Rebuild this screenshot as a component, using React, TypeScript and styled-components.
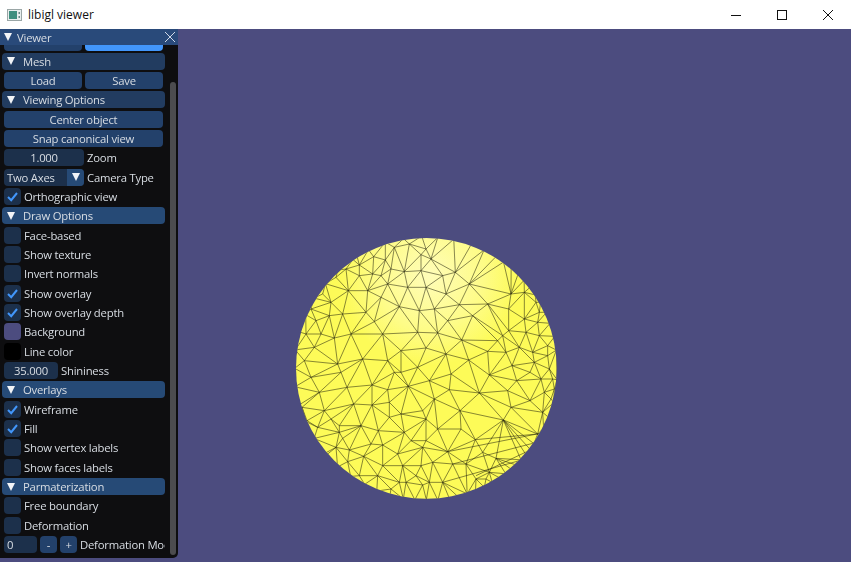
import React, { useMemo } from "react";
import styled, { createGlobalStyle } from "styled-components";

const GlobalStyle = createGlobalStyle`
  html, body {
    margin: 0;
    padding: 0;
    overflow: hidden;
    background: #4c4c7f;
  }
`;

const Page = styled.div`
  width: 851px;
  height: 562px;
  display: flex;
  flex-direction: column;
  overflow: hidden;
`;

const TitleBar = styled.header`
  height: 29px;
  flex: none;
  display: flex;
  align-items: center;
  background: #fff;
  padding-left: 7px;
  font-family: "Open Sans", "Noto Sans", sans-serif;
  font-size: 12px;
  color: #111;
`;

const TitleText = styled.span`
  margin-left: 6px;
  flex: 1;
`;

const WinButton = styled.div`
  width: 46px;
  height: 29px;
  display: flex;
  align-items: center;
  justify-content: center;
`;

const Viewport = styled.main`
  position: relative;
  flex: 1;
  display: flex;
  justify-content: center;
  align-items: flex-start;
  padding-top: 200px;
  background: #4c4c7f;
`;

const Panel = styled.aside`
  position: absolute;
  left: 0;
  top: 0;
  width: 178px;
  height: 529px;
  background: #0e0e10;
  border-radius: 0 0 5px 0;
  overflow: hidden;
  font-family: "Open Sans", "Noto Sans", sans-serif;
  font-size: 11.3px;
  letter-spacing: -0.22px;
  color: #d8dde3;
  filter: blur(0.3px);
`;

const PanelTitle = styled.div`
  height: 16px;
  display: flex;
  align-items: center;
  gap: 5px;
  padding: 0 3px 0 4px;
  background: #294a7a;
`;

const TitleLabel = styled.span`
  flex: 1;
`;

const Arrow = styled.i`
  flex: none;
  width: 0;
  height: 0;
  border-left: 4.5px solid transparent;
  border-right: 4.5px solid transparent;
  border-top: 8px solid #f2f4f7;
`;

const Body = styled.div`
  width: 165px;
  display: flex;
  flex-direction: column;
  gap: 2.33px;
  overflow: hidden;
`;

const ClippedRow = styled.div`
  height: 5.5px;
  display: flex;
  align-items: flex-end;
  gap: 3px;
  padding-left: 4px;
  margin-right: 2px;
  overflow: hidden;
`;

const ClippedButton = styled.div<{ $active?: boolean }>`
  flex: 1;
  height: 17px;
  border-radius: 4px;
  background: ${(p) => (p.$active ? "#4296fa" : "#23416b")};
`;

const Header = styled.div<{ $dim?: boolean }>`
  height: 17px;
  margin-left: 2px;
  display: flex;
  align-items: center;
  gap: 8px;
  padding-left: 5px;
  border-radius: 4px;
  background: ${(p) => (p.$dim ? "#223c60" : "#264a76")};
`;

const Row = styled.div`
  height: 17px;
  display: flex;
  align-items: center;
  gap: 3px;
  padding-left: 4px;
  white-space: nowrap;
`;

const Button = styled.div<{ $width?: number }>`
  flex: ${(p) => (p.$width ? "none" : "1")};
  width: ${(p) => (p.$width ? `${p.$width}px` : "auto")};
  height: 17px;
  display: flex;
  align-items: center;
  justify-content: center;
  border-radius: 4px;
  background: #23416b;
`;

const ButtonRow = styled(Row)`
  padding-right: 2px;
`;

const Input = styled.div<{ $width: number; $left?: boolean }>`
  flex: none;
  width: ${(p) => p.$width}px;
  height: 17px;
  display: flex;
  align-items: center;
  justify-content: ${(p) => (p.$left ? "flex-start" : "center")};
  padding-left: ${(p) => (p.$left ? "3px" : "0")};
  box-sizing: border-box;
  border-radius: 4px;
  background: #1c304b;
`;

const Combo = styled(Input)`
  justify-content: space-between;
  padding-left: 3px;
  overflow: hidden;
`;

const ComboArrow = styled.div`
  width: 17px;
  height: 17px;
  display: flex;
  align-items: center;
  justify-content: center;
  background: #264a76;
`;

const Check = styled.div<{ $color?: string }>`
  flex: none;
  width: 17px;
  height: 17px;
  display: flex;
  align-items: center;
  justify-content: center;
  border-radius: 4px;
  background: ${(p) => p.$color ?? "#1c304b"};
`;

const Clip = styled.span`
  overflow: hidden;
`;

const Scrollbar = styled.div`
  position: absolute;
  left: 170px;
  top: 53px;
  width: 6px;
  height: 473px;
  border-radius: 3px;
  background: #4c4c4f;
`;

const SphereFrame = styled.svg`
  flex: none;
  display: block;
  width: 280px;
  height: 280px;
`;

const TickIcon = () => (
  <svg width="13" height="13" viewBox="0 0 13 13" fill="none">
    <path d="M2 7l3.2 3.2L11 3" stroke="#4296fa" strokeWidth="2" />
  </svg>
);

const CX = 421;
const CY = 418;
const R = 391;

const quadrants: { dx: number; dy: number; pts: number[][] }[] = [
  {
    dx: 15,
    dy: 15,
    pts: [
      [283, 78], [340, 113], [205, 93], [248, 68], [390, 62], [172, 170], [205, 125], [290, 150],
      [225, 235], [155, 240], [115, 245], [270, 190], [325, 218], [385, 230], [250, 263], [180, 300],
      [275, 300], [330, 350], [380, 295], [130, 312], [75, 260], [45, 300], [95, 180], [135, 130],
      [140, 390], [215, 375], [40, 380], [70, 340], [245, 120], [165, 105], [230, 170], [350, 160],
      [310, 40], [355, 30], [270, 125], [300, 105], [195, 55], [120, 205], [60, 225], [90, 300],
    ],
  },
  {
    dx: 420,
    dy: 15,
    pts: [
      [50, 125], [88, 115], [130, 150], [60, 180], [100, 212], [140, 245], [185, 210], [25, 225],
      [65, 260], [35, 297], [107, 318], [60, 360], [128, 378], [185, 352], [248, 290], [248, 225],
      [255, 180], [295, 255], [335, 265], [300, 295], [340, 305], [365, 335], [320, 355], [270, 170],
      [295, 175], [330, 205], [340, 235], [15, 75], [0, 160], [-15, 110], [215, 320], [280, 340],
    ],
  },
  {
    dx: 15,
    dy: 420,
    pts: [
      [168, 55], [243, 48], [290, 62], [352, 52], [188, 105], [243, 108], [295, 100], [100, 125],
      [120, 150], [33, 115], [48, 155], [80, 175], [145, 170], [210, 170], [262, 185], [295, 145],
      [340, 190], [155, 208], [175, 243], [240, 225], [275, 228], [320, 255], [360, 215], [218, 262],
      [170, 278], [275, 290], [335, 290], [205, 320], [260, 320], [345, 340], [395, 348], [300, 360],
      [390, 290], [135, 235], [110, 255], [310, 10], [150, 10], [85, 70], [60, 25], [395, 125],
    ],
  },
  {
    dx: 420,
    dy: 420,
    pts: [
      [75, 15], [10, 35], [70, 62], [190, 18], [272, 35], [160, 72], [245, 65], [312, 95],
      [255, 115], [25, 90], [102, 125], [0, 150], [232, 153], [35, 180], [148, 212], [65, 248],
      [0, 215], [80, 285], [210, 268], [0, 295], [50, 340], [150, 330], [190, 310], [335, 195],
      [385, 60], [345, 30], [120, 285], [350, 130],
    ],
  },
  {
    // whole-sphere points, mostly along the seams of the four lists above
    dx: 0,
    dy: 0,
    pts: [
      [420, 357], [395, 415], [430, 460], [500, 435], [550, 392], [605, 368], [612, 438], [580, 490],
      [495, 485], [445, 512], [368, 470], [310, 525], [258, 468], [185, 475], [155, 405], [230, 385],
      [293, 312], [348, 368], [345, 430], [305, 395], [665, 480], [672, 535], [732, 430], [735, 505],
      [678, 410], [660, 370], [700, 345], [650, 320], [745, 400], [790, 420], [785, 380], [800, 450],
      [775, 490], [795, 510], [520, 545], [430, 568], [455, 600], [370, 635], [345, 555], [275, 605],
      [225, 590], [205, 525], [115, 545], [310, 570], [560, 632], [655, 573], [485, 668], [525, 600],
      [500, 705], [440, 700], [410, 655], [355, 710], [320, 680], [290, 640], [230, 680], [190, 660],
      [160, 610], [105, 590], [150, 570], [275, 740], [340, 760], [390, 740], [430, 760], [600, 750],
      [630, 690], [555, 700], [590, 670], [420, 135], [470, 140], [445, 240], [395, 240], [420, 60],
      [410, 190],
    ],
  },
];

const rimAngles = [
  5, 15, 22, 27, 31, 35, 38, 41, 44, 47, 50, 53, 56, 60, 64, 68, 72, 76, 80, 85, 90, 95, 100, 106, 112, 118,
  125, 132, 140, 148, 156, 164, 172, 180, 188, 196, 204, 212, 220, 228, 236, 244, 252, 260, 268, 275, 282,
  290, 296, 302, 306, 310, 314, 318, 322, 326, 330, 335, 340, 346, 352,
];

// long thin triangles the triangulation can't produce on its own
const extraEdges = [
  [755, 615, 568, 632],
  [768, 612, 485, 668],
  [752, 640, 500, 705],
  [735, 662, 570, 740],
  [700, 695, 470, 760],
];

function meshPoints() {
  const pts: number[][] = [];
  quadrants.forEach((q) =>
    q.pts.forEach(([x, y]) => {
      const px = x + q.dx;
      const py = y + q.dy;
      // crops overlap, drop a point that is already there
      if (pts.some((p) => Math.hypot(p[0] - px, p[1] - py) < 20)) return;
      pts.push([px, py]);
    })
  );
  rimAngles.forEach((a, i) => {
    const t = (a * Math.PI) / 180;
    // rim sits a little outside the clip, uneven so no four points are cocircular
    const r = R + 3 + ((i * 7) % 5);
    pts.push([CX + r * Math.cos(t), CY + r * Math.sin(t)]);
  });
  return pts;
}

function inCircle(p: number[], a: number[], b: number[], c: number[]) {
  const ax = a[0] - p[0], ay = a[1] - p[1];
  const bx = b[0] - p[0], by = b[1] - p[1];
  const cx = c[0] - p[0], cy = c[1] - p[1];
  const det =
    (ax * ax + ay * ay) * (bx * cy - cx * by) -
    (bx * bx + by * by) * (ax * cy - cx * ay) +
    (cx * cx + cy * cy) * (ax * by - bx * ay);
  const orient = (b[0] - a[0]) * (c[1] - a[1]) - (b[1] - a[1]) * (c[0] - a[0]);
  return orient > 0 ? det > 0 : det < 0;
}

// plain Bowyer-Watson, returns the mesh as one path string
function meshPath() {
  const pts = meshPoints();
  const n = pts.length;
  pts.push([-50000, -50000], [60000, -50000], [420, 70000]);
  let tris: number[][] = [[n, n + 1, n + 2]];
  for (let i = 0; i < n; i++) {
    const bad: number[][] = [];
    const good: number[][] = [];
    tris.forEach((t) => (inCircle(pts[i], pts[t[0]], pts[t[1]], pts[t[2]]) ? bad : good).push(t));
    const edges = new Map<string, number[]>();
    bad.forEach((t) => {
      [[t[0], t[1]], [t[1], t[2]], [t[2], t[0]]].forEach(([a, b]) => {
        const key = a < b ? `${a}_${b}` : `${b}_${a}`;
        if (edges.has(key)) edges.delete(key);
        else edges.set(key, [a, b]);
      });
    });
    edges.forEach(([a, b]) => good.push([a, b, i]));
    tris = good;
  }
  const seen = new Set<string>();
  let d = "";
  tris.forEach((t) => {
    [[t[0], t[1]], [t[1], t[2]], [t[2], t[0]]].forEach(([a, b]) => {
      if (a >= n || b >= n) return;
      const key = a < b ? `${a}_${b}` : `${b}_${a}`;
      if (seen.has(key)) return;
      seen.add(key);
      d += `M${pts[a][0].toFixed(1)} ${pts[a][1].toFixed(1)}L${pts[b][0].toFixed(1)} ${pts[b][1].toFixed(1)}`;
    });
  });
  extraEdges.forEach(([x1, y1, x2, y2]) => {
    d += `M${x1} ${y1}L${x2} ${y2}`;
  });
  return d;
}

function Sphere() {
  const d = useMemo(meshPath, []);
  return (
    <SphereFrame viewBox="0 0 840 840">
      <defs>
        <radialGradient id="shine" gradientUnits="userSpaceOnUse" cx="430" cy="140" r="270">
          <stop offset="0" stopColor="#fffdb8" />
          <stop offset="0.6" stopColor="#fefc88" />
          <stop offset="1" stopColor="#fdfb58" />
        </radialGradient>
        <clipPath id="ball">
          <circle cx={CX} cy={CY} r={R} />
        </clipPath>
      </defs>
      <circle cx={CX} cy={CY} r={R} fill="url(#shine)" />
      <path d={d} clipPath="url(#ball)" fill="none" stroke="#26260e" strokeOpacity="0.75" strokeWidth="2.2" />
    </SphereFrame>
  );
}

const CheckRow = ({ label, on, color }: { label: string; on?: boolean; color?: string }) => (
  <Row>
    <Check $color={color}>{on && <TickIcon />}</Check>
    {label}
  </Row>
);

const Section = ({ label, dim }: { label: string; dim?: boolean }) => (
  <Header $dim={dim}>
    <Arrow />
    {label}
  </Header>
);

export default function App() {
  return (
    <Page>
      <GlobalStyle />
      <TitleBar>
        <svg width="15" height="12" viewBox="0 0 15 12">
          <rect x="0.5" y="0.5" width="14" height="11" fill="#e8eeee" stroke="#9aa6a6" />
          <rect x="2" y="2" width="8" height="8" fill="#3f8f7f" />
          <rect x="11.5" y="3" width="1.5" height="2" fill="#6a8a88" />
          <rect x="11.5" y="7" width="1.5" height="2" fill="#6a8a88" />
        </svg>
        <TitleText>libigl viewer</TitleText>
        <WinButton>
          <svg width="10" height="10" viewBox="0 0 10 10">
            <path d="M0 5.5H10" stroke="#111" />
          </svg>
        </WinButton>
        <WinButton>
          <svg width="10" height="10" viewBox="0 0 10 10">
            <rect x="0.5" y="0.5" width="9" height="9" fill="none" stroke="#111" />
          </svg>
        </WinButton>
        <WinButton>
          <svg width="10" height="10" viewBox="0 0 10 10">
            <path d="M0 0L10 10M10 0L0 10" stroke="#111" />
          </svg>
        </WinButton>
      </TitleBar>
      <Viewport>
        <Sphere />
        <Panel>
          <PanelTitle>
            <Arrow />
            <TitleLabel>Viewer</TitleLabel>
            <svg width="10" height="10" viewBox="0 0 10 10">
              <path d="M0 0L10 10M10 0L0 10" stroke="#cfd8e6" />
            </svg>
          </PanelTitle>
          <Body>
            <ClippedRow>
              <ClippedButton />
              <ClippedButton $active />
            </ClippedRow>
            <Section label="Mesh" dim />
            <ButtonRow>
              <Button>Load</Button>
              <Button>Save</Button>
            </ButtonRow>
            <Section label="Viewing Options" dim />
            <ButtonRow>
              <Button>Center object</Button>
            </ButtonRow>
            <ButtonRow>
              <Button>Snap canonical view</Button>
            </ButtonRow>
            <Row>
              <Input $width={80}>1.000</Input>
              Zoom
            </Row>
            <Row>
              <Combo $width={80} $left>
                Two Axes
                <ComboArrow>
                  <Arrow />
                </ComboArrow>
              </Combo>
              Camera Type
            </Row>
            <CheckRow label="Orthographic view" on />
            <Section label="Draw Options" />
            <CheckRow label="Face-based" />
            <CheckRow label="Show texture" />
            <CheckRow label="Invert normals" />
            <CheckRow label="Show overlay" on />
            <CheckRow label="Show overlay depth" on />
            <CheckRow label="Background" color="#4c4c7f" />
            <CheckRow label="Line color" color="#000" />
            <Row>
              <Input $width={54}>35.000</Input>
              Shininess
            </Row>
            <Section label="Overlays" />
            <CheckRow label="Wireframe" on />
            <CheckRow label="Fill" on />
            <CheckRow label="Show vertex labels" />
            <CheckRow label="Show faces labels" />
            <Section label="Parmaterization" />
            <CheckRow label="Free boundary" />
            <CheckRow label="Deformation" />
            <Row>
              <Input $width={33} $left>0</Input>
              <Button $width={17}>-</Button>
              <Button $width={17}>+</Button>
              <Clip>Deformation Mode</Clip>
            </Row>
          </Body>
          <Scrollbar />
        </Panel>
      </Viewport>
    </Page>
  );
}
